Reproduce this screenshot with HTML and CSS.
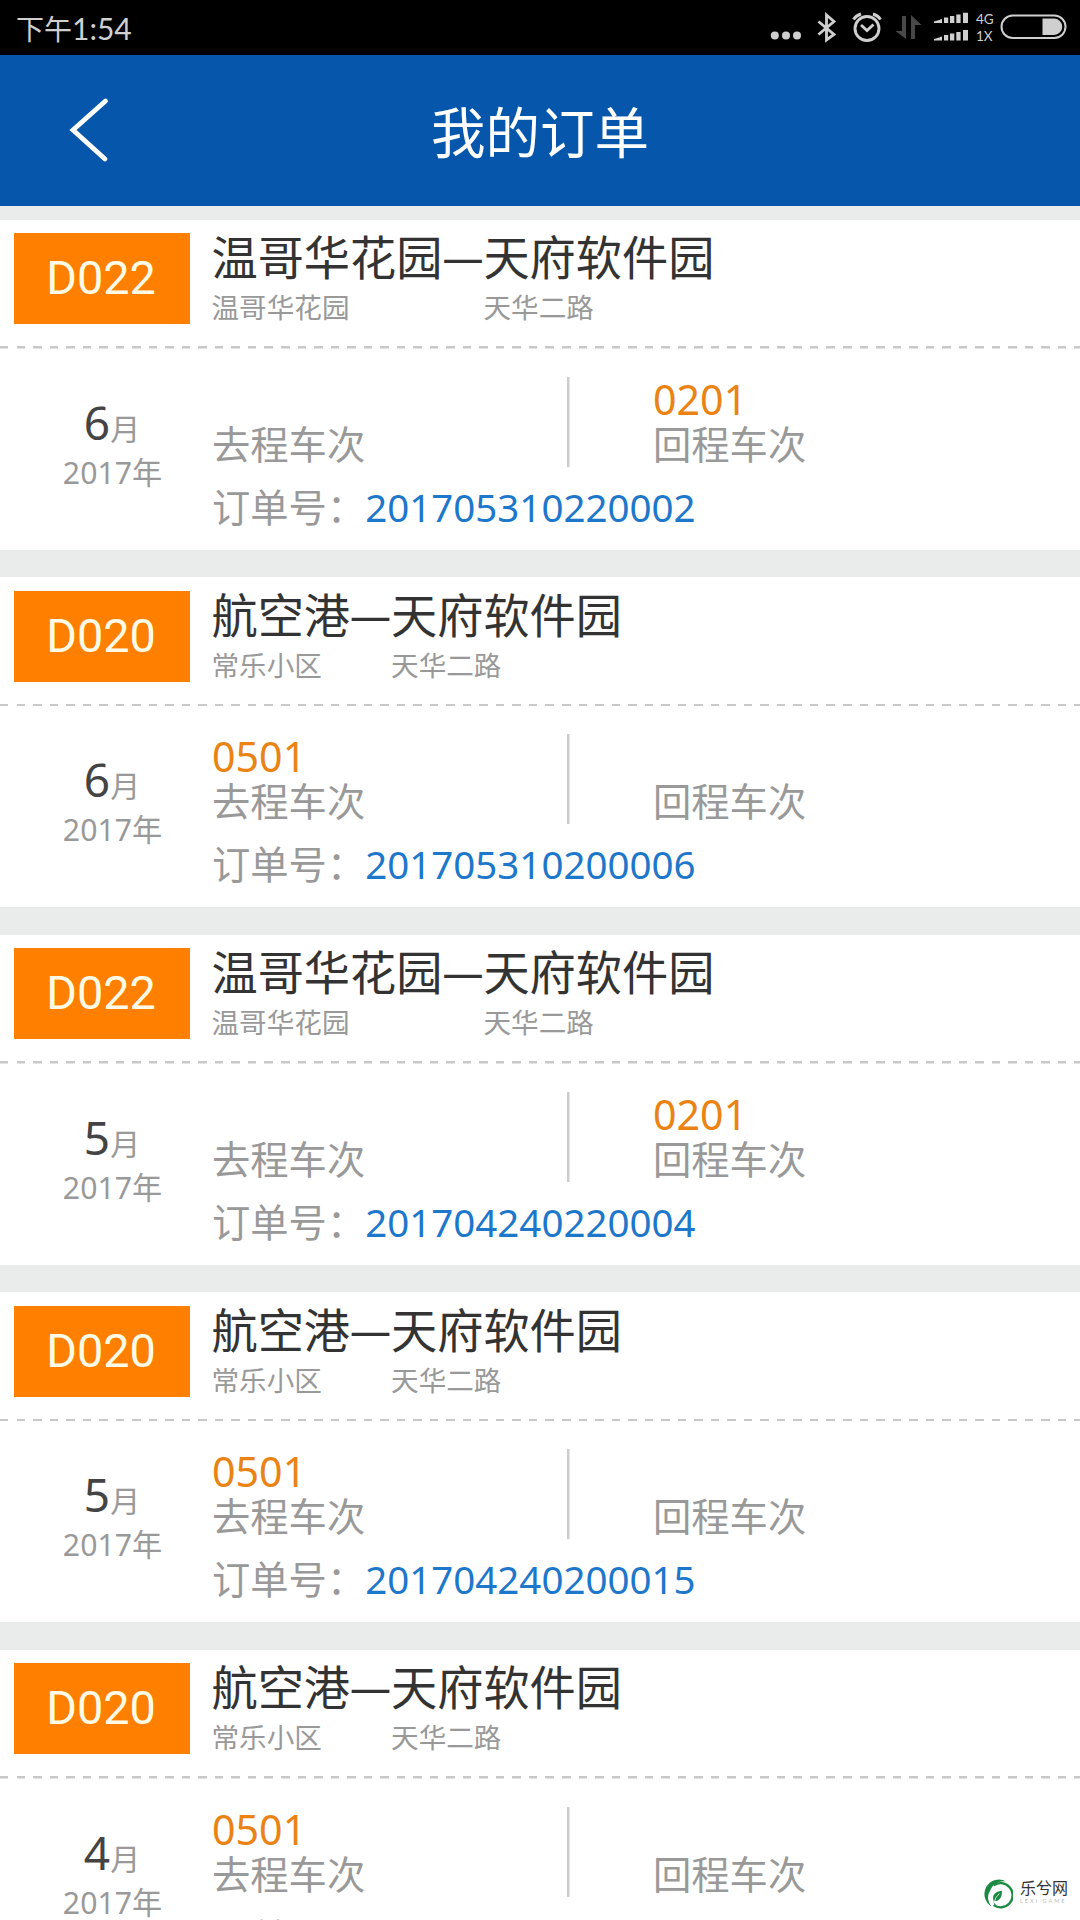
FILE: index.html
```html
<!DOCTYPE html>
<html lang="zh-CN">
<head>
<meta charset="utf-8">
<title>我的订单</title>
<link rel="stylesheet" href="styles.css">
</head>
<body>
<div class="screen">
  <div class="status">
    <span class="clock"><span class="clock-cn">下午</span>1:54</span>
    <div class="indicators">
      <svg class="ico-left" width="174" height="34" viewBox="766 10 174 34" aria-hidden="true">
        <g fill="#cfcfcf">
          <circle cx="774.8" cy="35.5" r="4"/><circle cx="786" cy="35.5" r="4"/><circle cx="797" cy="35.5" r="4"/>
        </g>
        <path d="M818.500 21.500 834 34.500 826.500 40V15L834 21.500 818.500 34.500" fill="none" stroke="#cfcfcf" stroke-width="2.800"/>
        <g fill="none" stroke="#cfcfcf" stroke-width="2.900">
          <circle cx="867" cy="28.500" r="12"/>
          <path d="M861 25 867 30.500 873.500 24.500M853.500 19.500Q856 15.500 861 14M880.500 19.500Q878 15.500 873 14"/>
        </g>
        <path d="M902 16h4v23L895.500 31h6.500zM911 39h4V25h6.500L911 15z" fill="#484848"/>
        <g fill="#cfcfcf">
          <path d="M934 23v-1.500l8-2.500v4z"/>
          <path d="M934 40.500v-1.500l8-2.500v4z"/>
        </g>
      </svg>
      <svg class="ico-signal" width="28" height="30" viewBox="940 12 28 30" aria-hidden="true">
        <path fill="#cfcfcf" d="M940 19.600l2-.600V23h-2zM944 17.500h4.200V23H944zM950 16h4.300v7H950zM956.300 14.500h4.300V23h-4.300zM963 12.800h5V23h-5zM940 37.100l2-.600v4h-2zM944 35h4.200v5.500H944zM950 33.500h4.300v7H950zM956.300 32h4.300v8.500h-4.300zM963 30h5v10.500h-5z"/>
      </svg>
      <div class="network"><span>4G</span><span>1X</span></div>
      <svg class="ico-battery" width="67" height="26" viewBox="0 0 67 26" aria-hidden="true">
        <rect x="1.500" y="1.500" width="64" height="22.500" rx="11.250" fill="none" stroke="#cfcfcf" stroke-width="2"/>
        <path d="M42.500 4.500h11.500a8.250 8.250 0 0 1 0 16.500H42.500z" fill="#cfcfcf"/>
      </svg>
    </div>
  </div>

  <header class="header">
    <svg class="back" width="40" height="68" viewBox="0 0 40 68" aria-hidden="true">
      <path d="M36.500 5 4 34 36 63" fill="none" stroke="#fff" stroke-width="4.800" stroke-linecap="round"/>
    </svg>
    <h1>我的订单</h1>
  </header>

  <main class="orders">
    <article class="card">
      <div class="head">
        <div class="badge">D022</div>
        <div class="route">
          <div class="stop"><b>温哥华花园<i>—</i></b><small>温哥华花园</small></div>
          <div class="stop"><b>天府软件园</b><small>天华二路</small></div>
        </div>
      </div>
      <div class="body">
        <div class="date"><p class="month">6<span>月</span></p><p class="year">2017年</p></div>
        <div class="detail">
          <div class="trips">
            <div class="trip"><em></em><span>去程车次</span></div>
            <div class="trip back-trip"><em>0201</em><span>回程车次</span></div>
          </div>
          <p class="number">订单号：<a>201705310220002</a></p>
        </div>
      </div>
    </article>

    <article class="card">
      <div class="head">
        <div class="badge">D020</div>
        <div class="route">
          <div class="stop"><b>航空港<i>—</i></b><small>常乐小区</small></div>
          <div class="stop"><b>天府软件园</b><small>天华二路</small></div>
        </div>
      </div>
      <div class="body">
        <div class="date"><p class="month">6<span>月</span></p><p class="year">2017年</p></div>
        <div class="detail">
          <div class="trips">
            <div class="trip"><em>0501</em><span>去程车次</span></div>
            <div class="trip back-trip"><em></em><span>回程车次</span></div>
          </div>
          <p class="number">订单号：<a>201705310200006</a></p>
        </div>
      </div>
    </article>

    <article class="card">
      <div class="head">
        <div class="badge">D022</div>
        <div class="route">
          <div class="stop"><b>温哥华花园<i>—</i></b><small>温哥华花园</small></div>
          <div class="stop"><b>天府软件园</b><small>天华二路</small></div>
        </div>
      </div>
      <div class="body">
        <div class="date"><p class="month">5<span>月</span></p><p class="year">2017年</p></div>
        <div class="detail">
          <div class="trips">
            <div class="trip"><em></em><span>去程车次</span></div>
            <div class="trip back-trip"><em>0201</em><span>回程车次</span></div>
          </div>
          <p class="number">订单号：<a>201704240220004</a></p>
        </div>
      </div>
    </article>

    <article class="card">
      <div class="head">
        <div class="badge">D020</div>
        <div class="route">
          <div class="stop"><b>航空港<i>—</i></b><small>常乐小区</small></div>
          <div class="stop"><b>天府软件园</b><small>天华二路</small></div>
        </div>
      </div>
      <div class="body">
        <div class="date"><p class="month">5<span>月</span></p><p class="year">2017年</p></div>
        <div class="detail">
          <div class="trips">
            <div class="trip"><em>0501</em><span>去程车次</span></div>
            <div class="trip back-trip"><em></em><span>回程车次</span></div>
          </div>
          <p class="number">订单号：<a>201704240200015</a></p>
        </div>
      </div>
    </article>

    <article class="card">
      <div class="head">
        <div class="badge">D020</div>
        <div class="route">
          <div class="stop"><b>航空港<i>—</i></b><small>常乐小区</small></div>
          <div class="stop"><b>天府软件园</b><small>天华二路</small></div>
        </div>
      </div>
      <div class="body">
        <div class="date"><p class="month">4<span>月</span></p><p class="year">2017年</p></div>
        <div class="detail">
          <div class="trips">
            <div class="trip"><em>0501</em><span>去程车次</span></div>
            <div class="trip back-trip"><em></em><span>回程车次</span></div>
          </div>
          <p class="number">订单号：</p>
        </div>
      </div>
    </article>
  </main>

  <div class="watermark">
    <svg width="31" height="31" viewBox="0 0 32 32" aria-hidden="true">
      <path d="M25 3.500A14.500 14.500 0 1 0 10 29.500 13 13 0 0 1 8.500 13C11 6 18 2.500 25 3.500z" fill="#1c8a42"/>
      <path d="M12 7.500A12.500 12.500 0 1 1 12 28" fill="none" stroke="#1c8a42" stroke-width="2.400"/>
      <path d="M20.500 13C13 14.500 10 18 12 24 18 24.500 21 20 20.500 13zM12 24Q12 28 15 29.500" fill="#1c8a42"/>
      <path d="M18 16Q13 20 12.500 26" stroke="#fff" stroke-width=".8" fill="none"/>
    </svg>
    <div class="brand"><span>乐兮网</span><small>LEXI GAME</small></div>
  </div>
</div>
</body>
</html>
```
FILE: styles.css
```css
* { box-sizing: border-box; }

body {
  margin: 0;
  font-family: "Noto Sans", "Noto Sans CJK SC", sans-serif;
  background: #eaecec;
}

p, h1 { margin: 0; }
svg { display: block; flex: none; }

.screen {
  position: relative;
  width: 1080px;
  height: 1920px;
  overflow: hidden;
}

/* Status bar */
.status {
  display: flex;
  justify-content: space-between;
  height: 55px;
  padding: 0 13px 0 16px;
  background: #000;
  color: #cfcfcf;
}

.clock {
  font: 30px/56px Lato, "Noto Sans CJK SC", sans-serif;
}

.clock-cn { font-size: 28px; }

.indicators {
  display: flex;
  align-items: flex-start;
}

.ico-left { margin-top: 10px; }
.ico-signal { margin-top: 12px; }

.network {
  display: flex;
  flex-direction: column;
  width: 32px;
  padding: 11px 0 0 8px;
  font: 13.500px/17px Lato, sans-serif;
}

.ico-battery { margin-top: 14px; }

/* Title bar */
.header {
  display: grid;
  grid-template-columns: 150px 1fr 150px;
  align-items: start;
  height: 151px;
  background: #0657ab;
  color: #fff;
}

.back { margin: 41px 0 0 69px; }

h1 {
  padding-top: 39px;
  font-size: 54.500px;
  font-weight: 400;
  line-height: 76px;
  text-align: center;
}

/* Order list */
.orders {
  display: flex;
  flex-direction: column;
  gap: 27.500px;
  padding-top: 13.500px;
}

.card {
  flex: none;
  height: 330px;
  background: #fff;
}

.head {
  display: flex;
  gap: 22px;
  height: 129px;
  padding: 13.500px 13.500px 0;
  background: repeating-linear-gradient(90deg, #c8c8c8 0 8.500px, transparent 8.500px 16.530px) 0 100% / 100% 2.500px no-repeat;
}

.badge {
  width: 176px;
  height: 91px;
  padding-right: 1px;
  background: #ff8000;
  color: #fffbe6;
  font: 46.800px/90px Roboto, sans-serif;
  text-align: center;
}

.route { display: flex; }

.stop {
  display: flex;
  flex-direction: column;
  white-space: nowrap;
}

.stop b {
  color: #333;
  font-size: 46.200px;
  font-weight: 400;
  line-height: 49px;
}

.stop i {
  font-size: 41px;
  font-style: normal;
  line-height: 0;
  vertical-align: 2px;
}

.stop small {
  color: #999;
  font-size: 27.600px;
  line-height: 51px;
}

.body { display: flex; }

.date {
  width: 212px;
  padding: 46px 0 0 12px;
  text-align: center;
}

.month {
  width: 200px;
  color: #444;
  font-size: 46px;
  line-height: 54px;
}

.month span {
  color: #999;
  font-size: 30px;
}

.year {
  padding-left: 1px;
  color: #999;
  font-size: 30.200px;
  line-height: 34px;
}

.detail { padding-top: 28px; }

.trips { display: flex; }

.trip {
  display: flex;
  flex-direction: column;
  width: 355px;
  color: #999;
  font-size: 38.300px;
  line-height: 45px;
}

.trip em {
  height: 45px;
  color: #ea8313;
  font-size: 41.200px;
  font-style: normal;
}

.back-trip {
  padding-left: 86px;
  background: linear-gradient(#ccc, #ccc) -.5px 0 / 3px 91px no-repeat;
}

.number {
  padding-top: 18px;
  color: #999;
  font-size: 38.300px;
  line-height: 45px;
}

.number a {
  color: #1d77ca;
  font-size: 38.500px;
}

/* Site mark laid over the list */
.watermark {
  position: absolute;
  left: 982px;
  top: 1878px;
  display: flex;
  gap: 7px;
}

.brand {
  display: flex;
  flex-direction: column;
  color: #333;
  font: 16px/18px "Noto Sans CJK SC", sans-serif;
}

.brand small {
  color: #bbb;
  font: 5.500px/10px Lato, sans-serif;
  letter-spacing: 2px;
}
```
